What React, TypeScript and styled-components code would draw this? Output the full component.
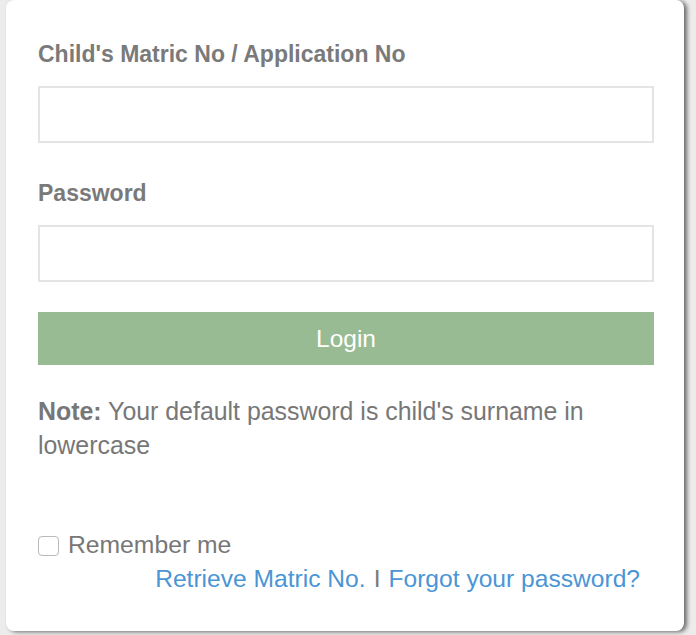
import styled, { createGlobalStyle } from 'styled-components';

const GlobalStyle = createGlobalStyle`
  html, body {
    margin: 0;
    padding: 0;
    background: #ececec;
    font-family: 'Liberation Sans', Arial, Helvetica, sans-serif;
  }
  * {
    box-sizing: border-box;
  }
`;

const Page = styled.div`
  width: 696px;
  height: 635px;
  padding: 0 12px 4px 6px;
`;

const Card = styled.div`
  width: 678px;
  height: 631px;
  background: #ffffff;
  border-radius: 8px;
  box-shadow: 3px 1px 4px rgba(0, 0, 0, 0.55);
  padding: 41px 30px 0 32px;
  display: flex;
  flex-direction: column;
`;

const Field = styled.div<{ $gap?: number }>`
  display: flex;
  flex-direction: column;
  margin-bottom: ${(p) => p.$gap ?? 0}px;
`;

const Label = styled.label<{ $space: number }>`
  font-size: 23px;
  line-height: 26px;
  font-weight: bold;
  color: #7a7a7a;
  margin-bottom: ${(p) => p.$space}px;
`;

const Input = styled.input`
  width: 100%;
  height: 57px;
  border: 2px solid #e4e4e4;
  background: #ffffff;
  outline: none;
  padding: 0 12px;
  font-size: 22px;
  font-family: inherit;
`;

const LoginButton = styled.button`
  width: 100%;
  height: 53px;
  border: none;
  background: #99bb93;
  color: #ffffff;
  font-family: inherit;
  font-size: 24.5px;
  cursor: pointer;
  margin-bottom: 29px;
`;

const Note = styled.p`
  margin: 0 0 69px;
  font-size: 24.9px;
  line-height: 34px;
  color: #777777;

  strong {
    font-weight: bold;
  }
`;

const RememberRow = styled.label`
  display: flex;
  align-items: center;
  height: 28px;
  font-size: 24.7px;
  color: #777777;
  margin-bottom: 6px;
`;

const Check = styled.span`
  width: 21px;
  height: 20px;
  border: 1.5px solid #b9b9b9;
  border-radius: 4px;
  background: #ffffff;
  margin-right: 9px;
  margin-top: 2px;
`;

const LinksRow = styled.div`
  display: flex;
  justify-content: flex-end;
  padding-right: 14px;
  font-size: 24.6px;
  line-height: 28px;
`;

const Link = styled.a`
  color: #4b95d5;
  text-decoration: none;
`;

const Divider = styled.span`
  color: #7a7a7a;
  margin: 0 8px;
`;

export default function App() {
  return (
    <>
      <GlobalStyle />
      <Page>
        <Card>
          <Field $gap={37}>
            <Label $space={19}>Child's Matric No / Application No</Label>
            <Input type="text" />
          </Field>
          <Field $gap={30}>
            <Label $space={19}>Password</Label>
            <Input type="password" />
          </Field>
          <LoginButton>Login</LoginButton>
          <Note>
            <strong>Note:</strong> Your default password is child's surname in lowercase
          </Note>
          <RememberRow>
            <Check />
            Remember me
          </RememberRow>
          <LinksRow>
            <Link href="#">Retrieve Matric No.</Link>
            <Divider>I</Divider>
            <Link href="#">Forgot your password?</Link>
          </LinksRow>
        </Card>
      </Page>
    </>
  );
}
